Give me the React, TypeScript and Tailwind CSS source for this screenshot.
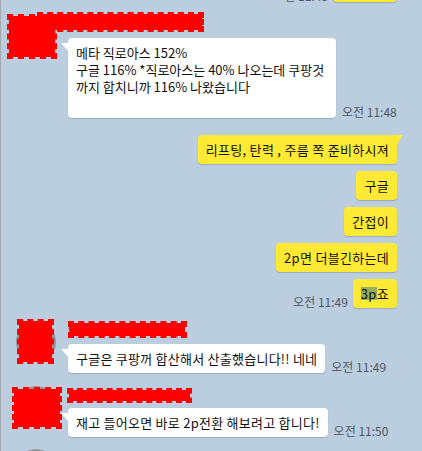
import React from "react";

function Red({ cls }: { cls: string }) {
  return (
    <div
      className={
        "absolute border-2 border-dashed border-[#ff0000] bg-[#ff0000] bg-clip-padding " +
        cls
      }
    />
  );
}

function WhiteTail() {
  return (
    <svg
      className="absolute left-[-7px] top-[5px]"
      width="8"
      height="9"
      viewBox="0 0 8 9"
    >
      <path d="M0 0 L8 0 L8 9 Z" fill="#ffffff" />
    </svg>
  );
}

function YellowTail() {
  return (
    <svg
      className="absolute right-[-7px] top-0"
      width="8"
      height="11"
      viewBox="0 0 8 11"
    >
      <path d="M0 0 L7 0 L0 11 Z" fill="#fee934" />
    </svg>
  );
}

function Time({ t }: { t: string }) {
  return (
    <div className="text-[12px] leading-[13px] text-[#4f5663] whitespace-nowrap">
      {t}
    </div>
  );
}

function Yellow({
  children,
  tail,
}: {
  children: React.ReactNode;
  tail?: boolean;
}) {
  return (
    <div className="relative rounded-[4px] bg-[#fee934] px-2 py-[6px] text-[13px] leading-[17px] tracking-[0.3px] text-[#111] shadow-[0_1px_1px_rgba(0,0,0,0.18)] whitespace-nowrap">
      {children}
      {tail ? <YellowTail /> : null}
    </div>
  );
}

function White({
  children,
  cls,
}: {
  children: React.ReactNode;
  cls?: string;
}) {
  return (
    <div
      className={
        "relative rounded-[4px] bg-white px-2 py-[6px] text-[13px] leading-[17px] text-[#111] shadow-[0_1px_1px_rgba(0,0,0,0.18)] whitespace-nowrap " +
        (cls ?? "")
      }
    >
      {children}
      <WhiteTail />
    </div>
  );
}

export default function App() {
  return (
    <div className="w-[422px] h-[451px] overflow-hidden bg-[#bacee0] shadow-[inset_1px_0_0_#a3a9ae] font-['Noto_Sans_CJK_KR',sans-serif] flex flex-col">
      {/* previous message (cut off) */}
      <div className="mt-[-27px] flex items-end justify-end gap-[5px] pr-[25px]">
        <Time t="오전 11:48" />
        <div className="h-[29px] w-[64px] rounded-[4px] bg-[#fee934] shadow-[0_1px_1px_rgba(0,0,0,0.18)]" />
      </div>

      {/* group 1 */}
      <div className="relative mt-[14px] flex">
        <div className="ml-[16px] mr-[12px] h-[40px] w-[40px] shrink-0 rounded-full bg-[#8f969c]" />
        <div className="flex flex-col gap-[6px]">
          <div className="h-[16px] text-[12px] leading-[16px] text-[#333]">
            이름
          </div>
          <div className="flex items-end gap-[6px]">
            <White cls="w-[268px]">
              메타 직로아스 152%
              <br />
              구글 116% *직로아스는 40% 나오는데 쿠팡것
              <br />
              까지 합치니까 116% 나왔습니다
              <br />
              &nbsp;
            </White>
            <Time t="오전 11:48" />
          </div>
        </div>
        <Red cls="left-[37px] top-[-4px] w-[167px] h-[20px]" />
        <Red cls="left-[7px] top-[-2px] w-[50px] h-[45px]" />
      </div>

      {/* my messages */}
      <div className="mt-[17px] flex flex-col items-end gap-[7px] pr-[25px]">
        <Yellow tail>리프팅, 탄력 , 주름 쪽 준비하시져</Yellow>
        <Yellow>구글</Yellow>
        <Yellow>간접이</Yellow>
        <Yellow>2p면 더블긴하는데</Yellow>
        <div className="flex items-end gap-[5px]">
          <Time t="오전 11:49" />
          <Yellow>
            <span className="inline-block bg-[#95ad5d] leading-[13px]">3p</span>죠
          </Yellow>
        </div>
      </div>

      {/* group 2 */}
      <div className="relative mt-[14px] flex">
        <div className="ml-[16px] mr-[12px] h-[40px] w-[40px] shrink-0 rounded-full bg-[#8f969c]" />
        <div className="flex flex-col gap-[6px]">
          <div className="h-[16px] text-[12px] leading-[16px] text-[#333]">
            이름
          </div>
          <div className="flex items-end gap-[6px]">
            <White cls="tracking-[0.25px]">구글은 쿠팡꺼 합산해서 산출했습니다!! 네네</White>
            <Time t="오전 11:49" />
          </div>
        </div>
        <Red cls="left-[68px] top-[-1px] w-[119px] h-[17px]" />
        <Red cls="left-[17px] top-[-3px] w-[37px] h-[45px]" />
      </div>

      {/* group 3 */}
      <div className="relative mt-[13px] flex">
        <div className="ml-[16px] mr-[12px] h-[40px] w-[40px] shrink-0 rounded-full bg-[#8f969c]" />
        <div className="flex flex-col gap-[6px]">
          <div className="h-[16px] text-[12px] leading-[16px] text-[#333]">
            s
          </div>
          <div className="flex items-end gap-[6px]">
            <White cls="tracking-[0.25px]">재고 들어오면 바로 2p전환 해보려고 합니다!</White>
            <Time t="오전 11:50" />
          </div>
        </div>
        <Red cls="left-[67px] top-[2px] w-[125px] h-[15px]" />
        <Red cls="left-[12px] top-[1px] w-[50px] h-[42px]" />
      </div>

      {/* group 4 (cut off) */}
      <div className="mt-[12px] flex">
        <div className="ml-[16px] h-[40px] w-[40px] shrink-0 rounded-full bg-[#8f969c]" />
      </div>
    </div>
  );
}
